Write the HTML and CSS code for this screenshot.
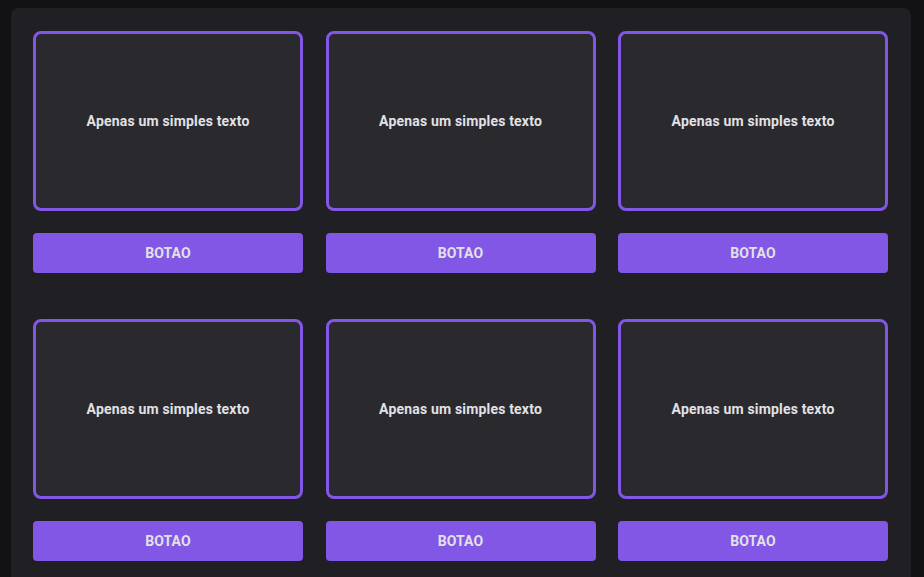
FILE: index.html
```html
<!DOCTYPE html>
<html lang="pt-BR">
<head>
<meta charset="utf-8">
<title>Cards</title>
<link rel="stylesheet" href="styles.css">
</head>
<body>
<main class="container">
  <div class="item"><div class="card">Apenas um simples texto</div><button class="btn">BOTAO</button></div>
  <div class="item"><div class="card">Apenas um simples texto</div><button class="btn">BOTAO</button></div>
  <div class="item"><div class="card">Apenas um simples texto</div><button class="btn">BOTAO</button></div>
  <div class="item"><div class="card">Apenas um simples texto</div><button class="btn">BOTAO</button></div>
  <div class="item"><div class="card">Apenas um simples texto</div><button class="btn">BOTAO</button></div>
  <div class="item"><div class="card">Apenas um simples texto</div><button class="btn">BOTAO</button></div>
</main>
</body>
</html>
```
FILE: styles.css
```css
* { box-sizing: border-box; }
html, body { margin: 0; padding: 0; }
body {
  background: #121214;
  font-family: Roboto, "Liberation Sans", sans-serif;
  padding: 8px 0 0 11px;
}
.container {
  width: 900px;
  background: #202024;
  border-radius: 8px;
  padding: 23px 23px 23px 22px;
  display: grid;
  grid-template-columns: repeat(3, 270px);
  column-gap: 22.5px;
  row-gap: 46px;
}
.item {
  display: flex;
  flex-direction: column;
  gap: 22px;
}
.card {
  height: 180px;
  border: 3px solid #8257e5;
  border-radius: 8px;
  background: #29292e;
  color: #e1e1e6;
  font-size: 14px;
  font-weight: 700;
  letter-spacing: 0.18px;
  display: flex;
  align-items: center;
  justify-content: center;
}
.btn {
  height: 40px;
  border: 0;
  border-radius: 4px;
  background: #8257e5;
  color: #e1e1e6;
  font-family: Roboto, "Liberation Sans", sans-serif;
  font-size: 14px;
  font-weight: 700;
  letter-spacing: 0.1px;
  padding: 0;
}
```
